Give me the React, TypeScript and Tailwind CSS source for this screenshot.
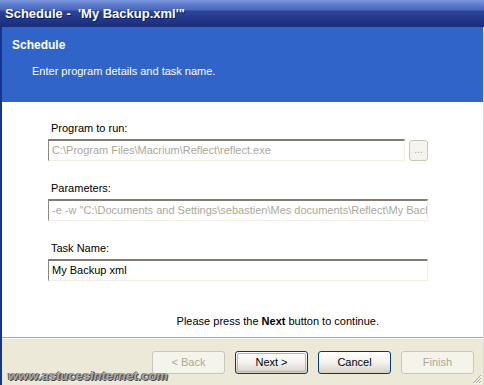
import React from "react";

function XpButton({ label, disabled, isDefault }: { label: string; disabled?: boolean; isDefault?: boolean }) {
  if (disabled) {
    return (
      <div className="w-[73px] h-[23px] flex items-center justify-center rounded-[3px] border border-[#c9c7ba] bg-[#f5f4ea] text-[#aca899]">
        {label}
      </div>
    );
  }
  return (
    <div className="w-[73px] h-[23px] rounded-[3px] border border-[#003c74] bg-gradient-to-b from-[#ffffff] via-[#f4f3ee] to-[#d6d0c5] p-[1px]">
      <div
        className={
          isDefault
            ? "w-full h-full flex items-center justify-center rounded-[2px] border border-[#98b8ea] text-black"
            : "w-full h-full flex items-center justify-center text-black"
        }
      >
        {label}
      </div>
    </div>
  );
}

function Field({ value, disabled }: { value: string; disabled?: boolean }) {
  return (
    <div
      className={
        "h-[22px] flex-1 min-w-0 flex items-center overflow-hidden whitespace-nowrap border-t-2 border-l border-r border-b border-t-[#7f7d72] border-l-[#8a887d] border-r-[#f1efe2] border-b-[#f1efe2] px-[3px] " +
        (disabled ? "bg-white text-[#aca899]" : "bg-white text-black")
      }
    >
      {value}
    </div>
  );
}

export default function App() {
  return (
    <div className="relative w-[484px] h-[385px] overflow-hidden flex flex-col bg-[#ece9d8] font-['Liberation_Sans',Arial,sans-serif] text-[11px] leading-[13px]">
      {/* Title bar */}
      <div className="h-[27px] shrink-0 flex items-center pl-[5px] bg-[linear-gradient(to_bottom,#7d98e0_0px,#5c79cb_5px,#4b67bb_10px,#2a469a_11px,#22398a_18px,#1b2d79_27px)]">
        <span className="text-white font-bold text-[13px] [text-shadow:1px_1px_0_#0f1c5a]">
          Schedule -&nbsp; 'My Backup.xml'"
        </span>
      </div>

      <div className="flex-1 flex flex-col border-l-2 border-l-[#15358f] border-r border-r-[#dcdace]">
        {/* Header */}
        <div className="h-[75px] shrink-0 bg-[#3164c8] text-white pt-[12px]">
          <div className="pl-[10px] font-bold text-[12px]">Schedule</div>
          <div className="pl-[30px] mt-[13px]">Enter program details and task name.</div>
        </div>

        {/* Content */}
        <div className="h-[235px] shrink-0 bg-white pt-[20px] pl-[46px]">
          <div className="w-[380px] flex flex-col">
            <div className="pl-[3px]">Program to run:</div>
            <div className="mt-[4px] flex items-center gap-[4px]">
              <Field value="C:\Program Files\Macrium\Reflect\reflect.exe" disabled />
              <div className="w-[19px] h-[21px] shrink-0 flex items-center justify-center rounded-[3px] border border-[#c9c7ba] bg-[#f4f3ee] text-[#aca899] text-[10px] pb-[2px]">
                ...
              </div>
            </div>

            <div className="pl-[3px] mt-[21px]">Parameters:</div>
            <div className="mt-[4px] flex">
              <Field
                value={'-e -w "C:\\Documents and Settings\\sebastien\\Mes documents\\Reflect\\My Backup.xml"'}
                disabled
              />
            </div>

            <div className="pl-[3px] mt-[21px]">Task Name:</div>
            <div className="mt-[4px] flex">
              <Field value="My Backup xml" />
            </div>
          </div>
          <div className="mt-[34px] flex justify-end pr-[104px]">
            <span>
              Please press the <b>Next</b> button to continue.
            </span>
          </div>
        </div>

        {/* Separator */}
        <div className="h-px bg-[#aca899]" />
        <div className="h-px bg-white" />

        {/* Footer */}
        <div className="flex-1 flex justify-end gap-[10px] pt-[12px] pr-[9px]">
          <XpButton label="< Back" disabled />
          <XpButton label="Next >" isDefault />
          <XpButton label="Cancel" />
          <XpButton label="Finish" disabled />
        </div>
      </div>

      {/* Watermark */}
      <div className="absolute left-[8px] top-[368px] text-[13px] leading-[15px] font-bold italic text-[#a8a8a8] [text-shadow:1px_1px_0_#4a4a4a,-1px_0_0_#5a5a5a]">
        www.astucesinternet.com
      </div>

      {/* Resize grip */}
      <svg className="absolute right-[2px] bottom-[1px]" width="10" height="10" viewBox="0 0 10 10">
        <path d="M9 1 L1 9 M9 4 L4 9 M9 7 L7 9" stroke="#aca899" strokeWidth="1" />
        <path d="M10 2 L2 10 M10 5 L5 10 M10 8 L8 10" stroke="#ffffff" strokeWidth="1" />
      </svg>
    </div>
  );
}
